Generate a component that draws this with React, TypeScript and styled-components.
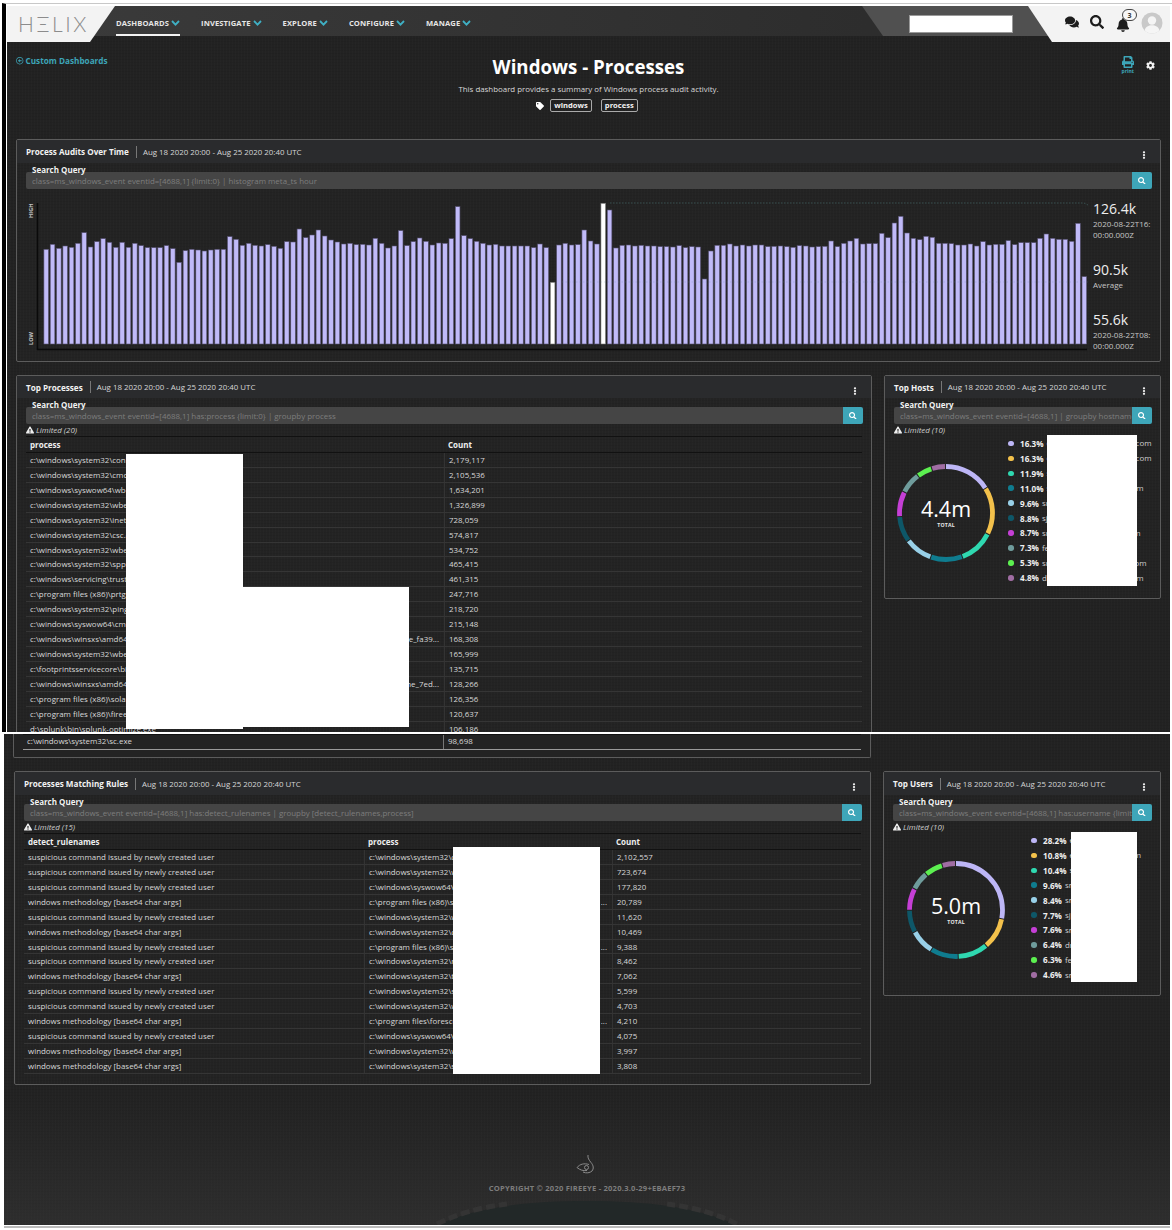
import React from 'react';
import styled, { createGlobalStyle } from 'styled-components';
import { FaComments, FaSearch, FaBell, FaPrint, FaCog, FaTag, FaExclamationTriangle, FaEllipsisV, FaRegArrowAltCircleLeft } from 'react-icons/fa';

const Global = createGlobalStyle`
  html, body { margin: 0; padding: 0; background: #fff; }
  * { box-sizing: border-box; }
  body { font-family: "Open Sans", "Liberation Sans", sans-serif; color: #ddd; }
`;

const texture = `repeating-linear-gradient(90deg, rgba(255,255,255,.012) 0 1px, transparent 1px 3px), repeating-linear-gradient(0deg, rgba(0,0,0,.05) 0 1px, transparent 1px 3px)`;

const Root = styled.div`
  width: 1172px; height: 1230px; background: #fff; overflow: hidden; position: relative;
`;
const TopFrame = styled.div`
  margin: 3px 0 2px 2px; width: 1170px; height: 729px;
  border-top: 1px solid #c8c8c8; border-left: 4px solid #000;
  padding: 2px 2px 0 1px; display: flex;
`;
const TopShot = styled.div`
  flex: 1; position: relative; overflow: hidden; background: ${texture}, #222;
`;
const BottomShot = styled.div`
  margin-left: 4px; width: 1166px; height: 491px; position: relative; overflow: hidden;
  padding: 0 9px; display: flex; flex-direction: column;
  background:
    linear-gradient(180deg, transparent 0 360px, rgba(60,60,60,.45) 100%),
    ${texture}, #222;
`;
const EndLine = styled.div`
  margin-left: 4px; width: 1166px; height: 3px; border-top: 1px solid #fff; border-bottom: 2px solid #bbb;
`;

const Header = styled.header`
  display: flex; align-items: flex-start; height: 30px;
  background: linear-gradient(90deg, #3b3b3b 0, #2d2d2d 860px);
`;
const Logo = styled.div`
  width: 108px; height: 36px; flex: none; background: #f3f3f3; position: relative; z-index: 2;
  clip-path: polygon(0 0, 100% 0, 83px 100%, 0 100%);
  padding: 5px 0 0 11px; font-family: Lato, "Open Sans", sans-serif; font-weight: 300;
  font-size: 21px; line-height: 25px; letter-spacing: 2.6px; color: #8c8c8c;
`;
const Menu = styled.nav`
  display: flex; gap: 21px; margin-left: 1px; height: 30px;
`;
const MenuItem = styled.div<{ $active?: boolean }>`
  display: flex; align-items: center; gap: 2px; height: 30px; padding-top: 6px;
  font-size: 7.6px; font-weight: 700; color: #e6e6e6; letter-spacing: .1px;
  border-bottom: 2px solid ${p => (p.$active ? '#f2f2f2' : 'transparent')};
`;
const NavFill = styled.div`flex: 1;`;
const NavRight = styled.div`
  width: 166px; height: 30px; background: #505050; padding: 9px 0 0 47px;
  clip-path: polygon(0 0, 100% 0, 100% 100%, 21px 100%);
`;
const HeaderSearch = styled.div`
  width: 104px; height: 18px; background: #fff; border: 1px solid #999;
`;
const UserSlot = styled.div`
  width: 142px; height: 36px; flex: none; position: relative; z-index: 2;
  background: linear-gradient(#505050 30px, #222 30px);
`;
const UserArea = styled.div`
  width: 100%; height: 36px; background: #f3f3f3;
  clip-path: polygon(0 0, 100% 0, 100% 100%, 24px 100%);
  display: flex; align-items: flex-start; gap: 11px; padding: 9px 0 0 37px; color: #1d1d1d;
`;
const BellWrap = styled.div`position: relative; width: 14px; height: 14px; margin-left: 1px;`;
const Badge = styled.span`
  position: absolute; left: 6px; top: -6px; width: 15px; height: 12px; border-radius: 6px;
  background: #f7f7f7; border: 1px solid #444; font-size: 7px; font-weight: 700; color: #333;
  display: flex; align-items: center; justify-content: center; line-height: 1;
`;
const Avatar = styled.svg`margin: -3px 0 0 0; flex: none;`;

const Intro = styled.section`
  height: 103px; display: grid; grid-template-columns: 1fr auto 1fr;
`;
const BackLink = styled.a`
  display: flex; align-items: center; gap: 2px; align-self: start; margin: 20px 0 0 9px;
  font-size: 8.2px; font-weight: 700; color: #3da5b8; line-height: 10px;
`;
const Center = styled.div`
  display: flex; flex-direction: column; align-items: center; padding-top: 18px;
`;
const Title = styled.h1`
  margin: 0; font-size: 18.7px; line-height: 26px; font-weight: 700; color: #fff;
`;
const Desc = styled.p`
  margin: 3px 0 0; font-size: 7.9px; line-height: 12px; color: #d8d8d8;
`;
const Tags = styled.div`
  margin: 4px 0 0 -3px; display: flex; align-items: center; gap: 9px; color: #fff;
`;
const TagIcon = styled.span`margin-right: -3px; line-height: 0;`;
const Tag = styled.span`
  border: 1px solid #aaa; border-radius: 2px; height: 13px; padding: 0 3px;
  font-size: 7.6px; font-weight: 700; line-height: 11px; color: #f2f2f2;
`;
const Actions = styled.div`
  display: flex; justify-content: flex-end; align-items: flex-start; gap: 12px; padding: 20px 15px 0 0;
`;
const PrintBtn = styled.div`
  display: flex; flex-direction: column; align-items: center; color: #3da5b8; font-size: 5px; line-height: 6px; font-weight: 700;
`;
const Gear = styled.div`color: #f2f2f2; margin-top: 5px; line-height: 0;`;

const Panel = styled.section<{ $fill?: boolean; $w?: number }>`
  border: 1px solid #5c5c5c; border-radius: 2px; background: ${texture}, #232323;
  ${p => (p.$fill ? 'flex: 1; min-width: 0;' : '')}
  ${p => (p.$w ? `width: ${p.$w}px; flex: none;` : '')}
`;
const Wide = styled.div`margin: 0 9px;`;
const PanelHead = styled.div<{ $h?: number }>`
  height: ${p => p.$h ?? 23}px; background: #2a2b2d; display: flex; align-items: center; padding: 0 12px 0 9px;
  font-size: 7.9px; white-space: nowrap;
`;
const PanelTitle = styled.strong`font-weight: 700; font-size: 8.15px; color: #f2f2f2;`;
const Sep = styled.span`width: 1px; height: 12px; background: #777; margin: 0 6px 0 7px;`;
const Range = styled.span`color: #d6d6d6;`;
const Kebab = styled.span`margin: 7px 0 0 auto; color: #eee; line-height: 0;`;

const Query = styled.div`padding: 2px 8px 0 9px;`;
const QueryLabel = styled.div`
  font-size: 8px; font-weight: 700; line-height: 10px; color: #f2f2f2; padding-left: 6px;
  margin-bottom: -3px; position: relative; z-index: 1;
`;
const QueryBar = styled.div`display: flex; height: 17px;`;
const QueryText = styled.div`
  flex: 1; min-width: 0; background: #454545; border-radius: 2px 0 0 2px; padding: 0 6px;
  color: #7d7d7d; font-size: 7.93px; line-height: 18px; white-space: nowrap; overflow: hidden;
`;
const QueryBtn = styled.div`
  width: 20px; flex: none; background: #3ea6b9; border-radius: 0 2px 2px 0; color: #fff;
  display: flex; align-items: center; justify-content: center;
`;
const Limited = styled.div`
  height: 12px; padding-left: 9px; display: flex; align-items: center; gap: 2px;
  font-size: 7.9px; font-style: italic; color: #cfcfcf;
`;
const ChartRow = styled.div`
  display: flex; gap: 5px; margin: 11px 0 9px 11px; height: 152px;
`;
const ChartLabels = styled.div`
  padding-top: 2px; display: flex; flex-direction: column; gap: 23px; flex: 1;
`;
const StatGroup = styled.div`display: flex; flex-direction: column;`;
const StatValue = styled.div`font-size: 14px; line-height: 14px; color: #eee;`;
const StatNote = styled.div`
  margin-top: 2px; font-size: 8px; line-height: 11px; color: #c6c6c6; white-space: pre-line;
`;

const Table = styled.div`
  margin: 0 9px; border-top: 1px solid #111;
`;
const Row = styled.div<{ $cols: string; $end?: boolean }>`
  display: grid; grid-template-columns: ${p => p.$cols}; height: 14.93px;
  border-bottom: 1px solid ${p => (p.$end ? '#9a9a9a' : '#353535')};
  font-size: 7.93px; line-height: ${p => (p.$end ? '13px' : '14px')}; color: #d8d8d8;
`;
const HeadRow = styled(Row)`
  height: 16px; font-weight: 700; font-size: 8px; line-height: 15px; color: #eee; border-bottom: 1px solid #111;
`;
const Cell = styled.div<{ $first?: boolean; $end?: boolean }>`
  padding: 0 5px 0 4px; white-space: nowrap; overflow: hidden; display: flex; justify-content: space-between;
  ${p => (p.$first ? '' : `border-left: 1px solid ${p.$end ? '#777' : '#333'};`)}
`;
const HeadCell = styled.div`padding: 0 5px 0 4px; white-space: nowrap;`;

const PanelRow = styled.div`display: flex; align-items: flex-start; gap: 12px;`;
const TopPanels = styled.div`margin: 13px 9px 0;`;
const Continue = styled.section`
  width: 858px; height: 24px; border: 1px solid #5c5c5c; border-top: none; border-radius: 0 0 2px 2px; background: #232323;
`;
const Lower = styled(PanelRow)`margin: 13px 0 0 1px;`;
const BottomTable = styled.div`padding-bottom: 10px;`;

const DonutBody = styled.div<{ $pad: number; $gap: number }>`
  display: flex; align-items: flex-start; gap: ${p => p.$gap}px; padding-left: ${p => p.$pad}px; height: 162px;
`;
const DonutWrap = styled.div`
  position: relative; width: 98px; height: 98px; margin-top: 28px; flex: none;
`;
const DonutCenter = styled.div`
  position: absolute; inset: 0; display: flex; flex-direction: column; align-items: center; justify-content: center; padding-bottom: 3px;
`;
const DonutValue = styled.div`font-size: 21.5px; line-height: 27px; color: #fff;`;
const DonutLabel = styled.div`font-size: 5.2px; line-height: 6px; font-weight: 700; color: #e8e8e8; letter-spacing: .2px;`;
const Legend = styled.div`display: flex; flex-direction: column;`;
const LegendRow = styled.div<{ $w: number }>`
  width: ${p => p.$w}px; height: 14.93px; display: flex; align-items: center; gap: 3px; font-size: 7.93px; color: #cfcfcf; white-space: nowrap;
`;
const Dot = styled.span<{ $c: string }>`
  width: 5.5px; height: 5.5px; border-radius: 50%; background: ${p => p.$c}; flex: none; margin-right: 3.5px;
`;
const Pct = styled.b`font-weight: 700; font-size: 8.15px; color: #f0f0f0;`;
const Tail = styled.span`margin-left: auto;`;

const Mask = styled.div<{ $x: number; $y: number; $w: number; $h: number }>`
  position: absolute; left: ${p => p.$x}px; top: ${p => p.$y}px; width: ${p => p.$w}px; height: ${p => p.$h}px;
  background: #fff; z-index: 3;
`;
const Footer = styled.footer`
  margin-top: auto; padding-bottom: 32px; display: flex; flex-direction: column; align-items: center;
  font-size: 7.6px; font-weight: 700; color: #7d7d7d; letter-spacing: .22px; position: relative; z-index: 1;
`;
const FooterText = styled.div`margin-top: 7px; line-height: 10px;`;
const FooterArc = styled.svg`
  position: absolute; left: 413px; bottom: 0;
`;

const Chev = () => (
  <svg width="9" height="6" viewBox="0 0 9 6"><polyline points="1,1 4.5,4.6 8,1" fill="none" stroke="#3fb0c4" strokeWidth="1.8" /></svg>
);

const a3 = [178,163,175,168,172,160,128,171,155,146,157,172,157,172,160,167,173,173,173,167,176,217,182,178,180,183,180,178,178,140,148,166,160,166,168,164,169,175,155,156,117,143,135,120,138,150,156,162,160,164,163,165,145,160,174,168,122];
const a11 = [152,140,129,139,150,144,145,131,35,122,131,139,145,150,148];
const a4 = [168,168,168,168,168,173,162,173,277,165,160,165,164,120,153,162,40,60,174,166,165,168,166,168,168,170,170,171,167,173,170,171,267,183,166,166,162,168,165,168,165,165,170,169,168,170,172,167,168,171,170,169,153,170,160,153,145,162,161,161,130,143,99,79,129,145,149,139,142,160,160,161,165,165,162,168,155,165,163,163,152,164,158,158,158,145,132,145,148,148,154,100,260];
const heights = [...a3.map(t => 154 - t / 3), ...a11.map(t => 149 - t / 3), ...a4.map(t => 154 - t / 3)];

const Chart = () => (
  <svg width="1060" height="152" viewBox="0 0 1060 152" style={{ flex: 'none' }}>
    <text transform="translate(4.500 18) rotate(-90)" fontSize="5.6" fontWeight="700" fill="#c4c4c4" fontFamily="Open Sans">HIGH</text>
    <text transform="translate(4.500 145) rotate(-90)" fontSize="5.6" fontWeight="700" fill="#c4c4c4" fontFamily="Open Sans">LOW</text>
    {heights.map((h, i) => {
      const white = i === 80 || i === 88;
      return <rect key={i} x={15.9 + i * 6.33} y={144 - h} width={4.6} height={h} fill={white ? '#fff' : '#c0baf8'} stroke={white ? '#777' : '#55506f'} strokeWidth=".6" />;
    })}
    <polyline points="582,3 1056,3 1066,8" fill="none" stroke="#3d5a5a" strokeWidth=".8" strokeDasharray="1.5 1.5" />
    <line x1="534" y1="82" x2="1060" y2="82" stroke="#6a88a8" strokeWidth=".5" strokeDasharray="1.5 2" opacity=".5" />
    <line x1="9.5" y1="3" x2="9.5" y2="150" stroke="#0a0a0a" strokeWidth="1.6" />
    <line x1="9" y1="149.5" x2="1059" y2="149.5" stroke="#0a0a0a" strokeWidth="1.6" />
  </svg>
);

const palette = ['#bdb6f6', '#f3c14b', '#2fd8b0', '#0f7c8f', '#98d0e8', '#0e5768', '#c53fd6', '#6f9c9c', '#5cf050', '#a06da3'];

const Donut = ({ values, label }: { values: number[]; label: string }) => {
  const total = values.reduce((s, v) => s + v, 0);
  let acc = 0;
  return (
    <DonutWrap>
      <svg width="98" height="98" viewBox="0 0 98 98">
        <g transform="rotate(-90 49 49)">
          {values.map((v, i) => {
            const len = (v / total) * 100;
            const seg = <circle key={i} cx="49" cy="49" r="46.5" fill="none" stroke={palette[i]} strokeWidth="4.8" pathLength={100} strokeDasharray={`${len - 0.35} ${100 - len + 0.35}`} strokeDashoffset={-acc} />;
            acc += len;
            return seg;
          })}
        </g>
      </svg>
      <DonutCenter>
        <DonutValue>{label}</DonutValue>
        <DonutLabel>TOTAL</DonutLabel>
      </DonutCenter>
    </DonutWrap>
  );
};

const Head = ({ title, h }: { title: string; h?: number }) => (
  <PanelHead $h={h}>
    <PanelTitle>{title}</PanelTitle>
    <Sep />
    <Range>Aug 18 2020 20:00 - Aug 25 2020 20:40 UTC</Range>
    <Kebab><FaEllipsisV size={8} /></Kebab>
  </PanelHead>
);

const SearchQuery = ({ q }: { q: string }) => (
  <Query>
    <QueryLabel>Search Query</QueryLabel>
    <QueryBar>
      <QueryText>{q}</QueryText>
      <QueryBtn><FaSearch size={7.5} /></QueryBtn>
    </QueryBar>
  </Query>
);

const Lim = ({ n }: { n: number }) => (
  <Limited><FaExclamationTriangle size={8} color="#eee" /> Limited ({n})</Limited>
);

const sys = 'c:\\windows\\system32\\';
const wow = 'c:\\windows\\syswow64\\';
const pf = 'c:\\program files (x86)\\';
const processes: [string, string, string?][] = [
  [sys + 'conhost.exe', '2,179,117'],
  [sys + 'cmd.exe', '2,105,536'],
  [wow + 'wbem\\wmiprvse.exe', '1,634,201'],
  [sys + 'wbem\\wmiprvse.exe', '1,326,899'],
  [sys + 'inetsrv\\w3wp.exe', '728,059'],
  [sys + 'csc.exe', '574,817'],
  [sys + 'wbem\\wmic.exe', '534,752'],
  [sys + 'sppsvc.exe', '465,415'],
  ['c:\\windows\\servicing\\trustedinstaller.exe', '461,315'],
  [pf + 'prtg network monitor\\probe.exe', '247,716'],
  [sys + 'ping.exe', '218,720'],
  [wow + 'cmd.exe', '215,148'],
  ['c:\\windows\\winsxs\\amd64_microsoft-windows-servicing', '168,308', 'e_fa39...'],
  [sys + 'wbem\\scrcons.exe', '165,999'],
  ['c:\\footprintsservicecore\\bin\\service.exe', '135,715'],
  ['c:\\windows\\winsxs\\amd64_microsoft-windows-servicing', '128,266', 'ne_7ed...'],
  [pf + 'solarwinds\\agent.exe', '126,356'],
  [pf + 'fireeye\\xagt.exe', '120,637'],
  ['d:\\splunk\\bin\\splunk-optimize.exe', '106,186'],
];
const S = 'suspicious command issued by newly created user';
const W = 'windows methodology [base64 char args]';
const rules: [string, string, string, string?][] = [
  [S, sys + 'cmd.exe', '2,102,557'],
  [S, sys + 'wbem\\wmic.exe', '723,674'],
  [S, wow + 'cmd.exe', '177,820'],
  [W, pf + 'solarwinds\\agent', '20,789', '...'],
  [S, sys + 'wbem.exe', '11,620'],
  [W, sys + 'cmd.exe', '10,469'],
  [S, pf + 'solarwinds\\agent', '9,388', '...'],
  [S, sys + 'net.exe', '8,462'],
  [W, sys + 'tasklist.exe', '7,062'],
  [S, sys + 'sc.exe', '5,599'],
  [S, sys + 'wscript.exe', '4,703'],
  [W, 'c:\\program files\\forescout\\agent', '4,210', '...'],
  [S, wow + 'wscript.exe', '4,075'],
  [W, sys + 'wsmprovhost.exe', '3,997'],
  [W, sys + 'sihost.exe', '3,808'],
];

const hostRows: [number, string, string, string, number][] = [
  [16.3, '16.3%', 'd', '.com', 143.5],
  [16.3, '16.3%', 'd', '.com', 143.5],
  [11.9, '11.9%', 's', '', 143.5],
  [11.0, '11.0%', 's', 'm', 135.5],
  [9.6, '9.6%', 'sr', '', 143.5],
  [8.8, '8.8%', 'sj', '', 143.5],
  [8.7, '8.7%', 'sr', 'm', 132.5],
  [7.3, '7.3%', 'fe', '', 143.5],
  [5.3, '5.3%', 'sr', 'om', 138.5],
  [4.8, '4.8%', 'd', 'm', 135.5],
];
const userRows: [number, string, string, string, number][] = [
  [28.2, '28.2%', 'e', '', 110],
  [10.8, '10.8%', 'e', 'm', 110],
  [10.4, '10.4%', 's', '', 110],
  [9.6, '9.6%', 'sn', '', 110],
  [8.4, '8.4%', 'sn', '', 110],
  [7.7, '7.7%', 'sj', '', 110],
  [7.6, '7.6%', 'sn', '', 110],
  [6.4, '6.4%', 'dr', '', 110],
  [6.3, '6.3%', 'fe', '', 110],
  [4.6, '4.6%', 'sn', '', 110],
];

const LegendList = ({ rows }: { rows: [number, string, string, string, number][] }) => (
  <Legend>
    {rows.map((r, i) => (
      <LegendRow key={i} $w={r[4]}>
        <Dot $c={palette[i]} />
        <Pct>{r[1]}</Pct>
        <span>{r[2]}</span>
        {r[3] && <Tail>{r[3]}</Tail>}
      </LegendRow>
    ))}
  </Legend>
);

const pCols = '418px 1fr';
const cCols = '420px 1fr';
const rCols = '340px 248px 1fr';

export default function App() {
  return (
    <Root>
      <Global />
      <TopFrame>
        <TopShot>
          <Header>
            <Logo>HΞLIX</Logo>
            <Menu>
              <MenuItem $active>DASHBOARDS <Chev /></MenuItem>
              <MenuItem>INVESTIGATE <Chev /></MenuItem>
              <MenuItem>EXPLORE <Chev /></MenuItem>
              <MenuItem>CONFIGURE <Chev /></MenuItem>
              <MenuItem>MANAGE <Chev /></MenuItem>
            </Menu>
            <NavFill />
            <NavRight><HeaderSearch /></NavRight>
            <UserSlot>
              <UserArea>
                <FaComments size={14} />
                <FaSearch size={14} />
                <BellWrap>
                  <FaBell size={14} />
                  <Badge>3</Badge>
                </BellWrap>
                <Avatar width="22" height="22" viewBox="0 0 22 22">
                  <circle cx="11" cy="11" r="10.5" fill="#c9c9c9" />
                  <circle cx="11" cy="8.500" r="4.200" fill="#f5f5f5" />
                  <path d="M3.600 18.200c1-3.600 4-5 7.400-5s6.400 1.400 7.400 5A10 10 0 0 1 3.600 18.200z" fill="#f5f5f5" />
                </Avatar>
              </UserArea>
            </UserSlot>
          </Header>

          <Intro>
            <BackLink><FaRegArrowAltCircleLeft size={7.5} /> Custom Dashboards</BackLink>
            <Center>
              <Title>Windows - Processes</Title>
              <Desc>This dashboard provides a summary of Windows process audit activity.</Desc>
              <Tags>
                <TagIcon><FaTag size={8} /></TagIcon>
                <Tag>windows</Tag>
                <Tag>process</Tag>
              </Tags>
            </Center>
            <Actions>
              <PrintBtn><FaPrint size={12} />print</PrintBtn>
              <Gear><FaCog size={9} /></Gear>
            </Actions>
          </Intro>

          <Wide>
            <Panel>
              <Head title="Process Audits Over Time" />
              <SearchQuery q="class=ms_windows_event eventid=[4688,1] {limit:0} | histogram meta_ts hour" />
              <ChartRow>
                <Chart />
                <ChartLabels>
                  <StatGroup><StatValue>126.4k</StatValue><StatNote>{'2020-08-22T16:\n00:00.000Z'}</StatNote></StatGroup>
                  <StatGroup><StatValue>90.5k</StatValue><StatNote>Average</StatNote></StatGroup>
                  <StatGroup><StatValue>55.6k</StatValue><StatNote>{'2020-08-22T08:\n00:00.000Z'}</StatNote></StatGroup>
                </ChartLabels>
              </ChartRow>
            </Panel>
          </Wide>

          <TopPanels>
            <PanelRow>
              <Panel $fill>
                <Head title="Top Processes" h={22} />
                <SearchQuery q="class=ms_windows_event eventid=[4688,1] has:process {limit:0} | groupby process" />
                <Lim n={20} />
                <Table>
                  <HeadRow $cols={pCols}><HeadCell>process</HeadCell><HeadCell>Count</HeadCell></HeadRow>
                  {processes.map((r, i) => (
                    <Row key={i} $cols={pCols}>
                      <Cell $first><span>{r[0]}</span>{r[2] && <span>{r[2]}</span>}</Cell>
                      <Cell>{r[1]}</Cell>
                    </Row>
                  ))}
                </Table>
              </Panel>
              <Panel $w={277}>
                <Head title="Top Hosts" h={22} />
                <SearchQuery q="class=ms_windows_event eventid=[4688,1] | groupby hostname" />
                <Lim n={10} />
                <DonutBody $pad={12} $gap={13}>
                  <Donut values={hostRows.map(r => r[0])} label="4.4m" />
                  <LegendList rows={hostRows} />
                </DonutBody>
              </Panel>
            </PanelRow>
          </TopPanels>

          <Mask $x={119} $y={448} $w={117} $h={275} />
          <Mask $x={236} $y={581} $w={166} $h={140} />
          <Mask $x={1040} $y={429} $w={90} $h={151} />
        </TopShot>
      </TopFrame>

      <BottomShot>
        <Continue>
          <Table>
            <Row $cols={cCols} $end><Cell $first $end>c:\windows\system32\sc.exe</Cell><Cell $end>98,698</Cell></Row>
          </Table>
        </Continue>

        <Lower>
          <Panel $fill>
            <Head title="Processes Matching Rules" />
            <SearchQuery q="class=ms_windows_event eventid=[4688,1] has:detect_rulenames | groupby [detect_rulenames,process]" />
            <Lim n={15} />
            <BottomTable>
              <Table>
                <HeadRow $cols={rCols}><HeadCell>detect_rulenames</HeadCell><HeadCell>process</HeadCell><HeadCell>Count</HeadCell></HeadRow>
                {rules.map((r, i) => (
                  <Row key={i} $cols={rCols}>
                    <Cell $first>{r[0]}</Cell>
                    <Cell><span>{r[1]}</span>{r[3] && <span>{r[3]}</span>}</Cell>
                    <Cell>{r[2]}</Cell>
                  </Row>
                ))}
              </Table>
            </BottomTable>
          </Panel>
          <Panel $w={278}>
            <Head title="Top Users" />
            <SearchQuery q="class=ms_windows_event eventid=[4688,1] has:username {limit:0} | groupby username" />
            <Lim n={10} />
            <DonutBody $pad={23} $gap={26}>
              <Donut values={userRows.map(r => r[0])} label="5.0m" />
              <LegendList rows={userRows} />
            </DonutBody>
          </Panel>
        </Lower>

        <Footer>
          <svg width="22" height="22" viewBox="0 0 22 22" fill="none" stroke="#8a8a8a" strokeWidth="1">
            <path d="M12 1c-.5 3 1 5 3 7.500 2.500 3 3 6 1 8.500-2 2-6 2.500-9 1" />
            <path d="M1 13.500c3-3.500 7-4.500 12-3" />
            <path d="M1 13.500c3 2.500 6 3.500 10 3" />
            <circle cx="10.500" cy="13.500" r="2" />
          </svg>
          <FooterText>COPYRIGHT © 2020 FIREEYE - 2020.3.0-29+EBAEF73</FooterText>
        </Footer>

        <FooterArc width="340" height="26" viewBox="0 0 340 26">
          <path d="M20 26C60 8 110 2 170 2s110 6 150 24z" fill="#222828" />
          <path d="M20 25C40 15 60 9 90 5M320 25C300 15 280 9 250 5" fill="none" stroke="#343434" strokeWidth="5" strokeDasharray="9 4" />
        </FooterArc>

        <Mask $x={449} $y={113} $w={147} $h={227} />
        <Mask $x={1067} $y={98} $w={66} $h={150} />
      </BottomShot>
      <EndLine />
    </Root>
  );
}
